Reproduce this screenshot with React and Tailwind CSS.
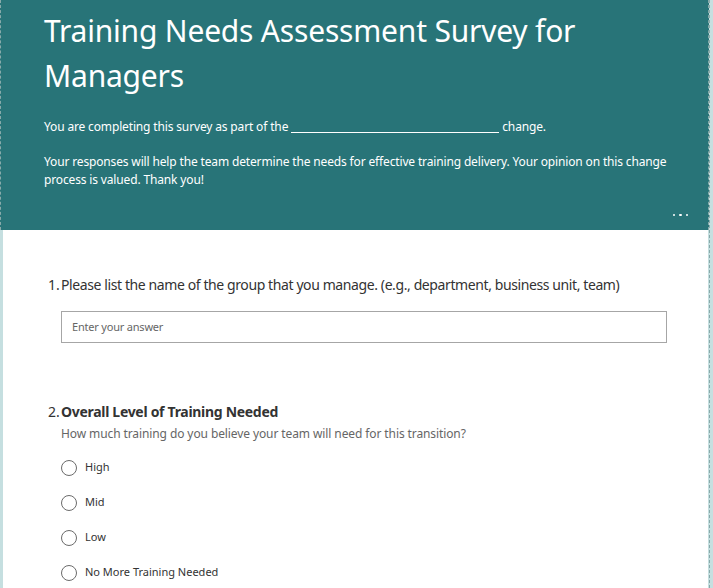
import React from "react";

const font = { fontFamily: '"Noto Sans", "Open Sans", sans-serif' };

function Radio({ label }) {
  return (
    <label className="flex items-center h-[35px]">
      <span className="w-[16px] h-[16px] rounded-full border border-[#6b6b6b] bg-white shrink-0" />
      <span className="ml-[8px] text-[11px] text-[#333]">{label}</span>
    </label>
  );
}

export default function App() {
  return (
    <div className="w-[713px] h-[588px] overflow-hidden bg-[#c5dfe0] flex" style={font}>
      <div className="flex-1 flex flex-col">
        <div className="bg-[#287478] h-[230px] shrink-0 border-l border-r border-dashed border-[#8aa] pl-[43px] pr-[40px] pt-[8px] flex flex-col text-white">
          <h1 className="text-[30px] leading-[45px] font-normal tracking-[-0.2px]">
            Training Needs Assessment Survey for Managers
          </h1>
          <p className="text-[12px] leading-[18px] mt-[20px] tracking-[-0.15px] flex items-end">
            <span>You are completing this survey as part of the</span>
            <span className="inline-block w-[208px] h-[1px] bg-white mx-[3px] mb-[3px]" />
            <span>change.</span>
          </p>
          <p className="text-[12px] leading-[18px] mt-[17px] tracking-[-0.15px]">
            Your responses will help the team determine the needs for effective training delivery. Your opinion on this change process is valued. Thank you!
          </p>
          <div className="flex-1" />
          <div className="flex justify-end gap-[4px] pb-[14px] mr-[-20px]">
            <span className="w-[2.5px] h-[2.5px] bg-white rounded-full" />
            <span className="w-[2.5px] h-[2.5px] bg-white rounded-full" />
            <span className="w-[2.5px] h-[2.5px] bg-white rounded-full" />
          </div>
        </div>
        <div className="flex-1 bg-white ml-[3px] mr-[1px] pl-[45px] pr-[41px] pt-[45px]">
          <div className="flex text-[14px] text-[#333] leading-[20px]">
            <span className="w-[13px] shrink-0">1.</span>
            <span className="tracking-[-0.4px]">Please list the name of the group that you manage. (e.g., department, business unit, team)</span>
          </div>
          <div className="ml-[13px] mt-[16px] h-[32px] border border-[#a6a6a6] flex items-center pl-[10px] text-[11px] text-[#666] tracking-[-0.2px]">
            Enter your answer
          </div>
          <div className="flex text-[14px] text-[#333] leading-[20px] mt-[59px]">
            <span className="w-[13px] shrink-0">2.</span>
            <span className="font-bold tracking-[-0.3px]">Overall Level of Training Needed</span>
          </div>
          <div className="ml-[13px] mt-[4px] text-[12px] text-[#666] leading-[16px] tracking-[-0.1px]">
            How much training do you believe your team will need for this transition?
          </div>
          <div className="ml-[13px] mt-[8px] flex flex-col">
            <Radio label="High" />
            <Radio label="Mid" />
            <Radio label="Low" />
            <Radio label="No More Training Needed" />
          </div>
        </div>
      </div>
      <div className="w-[4px] border-l border-dashed border-[#8aa]" />
    </div>
  );
}
